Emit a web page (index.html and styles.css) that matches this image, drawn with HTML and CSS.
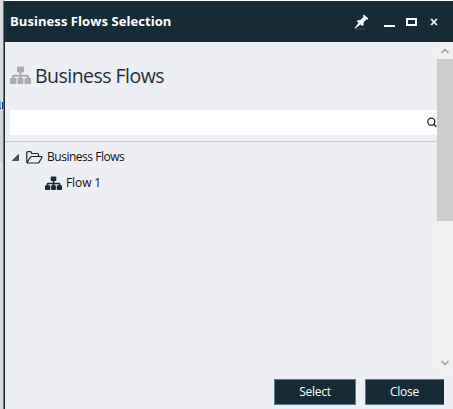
FILE: index.html
```html
<!DOCTYPE html>
<html lang="en">
<head>
<meta charset="utf-8">
<title>Business Flows Selection</title>
<link rel="stylesheet" href="styles.css">
</head>
<body>
<svg width="0" height="0" class="defs">
  <symbol id="sitemap" viewBox="0 0 21 18">
    <path d="M8 0.500h5q1 0 1 1v4q0 1-1 1h-1.500v2.300h6q1.500 0 1.500 1.500v1.700h1q1 0 1 1v4q0 1-1 1h-4.500q-1 0-1-1v-4q0-1 1-1h1.500v-1.300h-5.500v1.300h1q1 0 1 1v4q0 1-1 1h-4q-1 0-1-1v-4q0-1 1-1h1v-1.300h-5.500v1.300h1.500q1 0 1 1v4q0 1-1 1h-4.500q-1 0-1-1v-4q0-1 1-1h1v-1.700q0-1.500 1.500-1.500h6v-2.300h-1.500q-1 0-1-1v-4q0-1 1-1z" fill="currentColor"/>
  </symbol>
</svg>
<div class="screen">
  <div class="backdrop"><i class="tab"></i><i class="panel"></i></div>
  <main class="window">
    <header class="titlebar">
      <h1>Business Flows Selection</h1>
      <div class="controls">
        <svg class="pin" width="15" height="16" viewBox="0 0 15 16"><path d="M9.800 0.500L14.300 4.500L13.200 5.700L12.200 5.400L9.600 8.500L9.500 11L8.300 12L6.500 10.500L1.500 14.500L0.500 14.200L4.500 8.800L2.800 7.200L3.800 6.200L6.300 5.900L9.500 3L9 1.500Z" fill="#fff"/><path d="M1 15h10" stroke="#3d5461" stroke-width="1"/></svg>
        <i class="minimize"></i>
        <i class="maximize"></i>
        <svg class="close" width="8" height="8" viewBox="0 0 8 8"><path d="M1.500 1.500L6.500 6.500M6.500 1.500L1.500 6.500" stroke="#fff" stroke-width="1.600"/><path d="M.5 1.300h2.300M5.200 1.300h2.300M.5 6.700h2.300M5.200 6.700h2.300" stroke="#fff" stroke-width=".9"/></svg>
      </div>
    </header>
    <div class="body">
      <section class="content">
        <div class="heading">
          <svg width="21" height="18"><use href="#sitemap"/></svg>
          <h2>Business Flows</h2>
        </div>
        <div class="search">
          <svg width="10" height="11" viewBox="0 0 10 11"><circle cx="4.300" cy="4.700" r="3.500" fill="none" stroke="#172b37" stroke-width="1.300"/><path d="M6.300 7L9.500 9.800" stroke="#172b37" stroke-width="1.400"/></svg>
        </div>
        <div class="tree">
          <div class="row root">
            <svg class="arrow" width="7" height="7" viewBox="0 0 7 7"><path d="M6.500 .5V6.500H.5Z" fill="#555" stroke="#333" stroke-width=".8"/></svg>
            <svg class="folder" width="17" height="13" viewBox="0 0 17 13"><path d="M.8 11V1.700Q.8.700 1.800.700H4.500Q5.500.700 5.500 1.700V2.500H11.500Q12.500 2.500 12.500 3.500V5.500M1.200 11.500L4.200 6.300Q4.700 5.500 5.500 5.500H15.500Q16.400 5.600 15.800 6.500L13.200 11.100Q12.600 12 11.500 12H1.800Q.8 12 .8 11" fill="none" stroke="#172b37" stroke-width="1.200"/></svg>
            <span>Business Flows</span>
          </div>
          <div class="row child">
            <svg width="17" height="14" viewBox="0 0 21 18" preserveAspectRatio="none"><use href="#sitemap"/></svg>
            <span>Flow 1</span>
          </div>
        </div>
      </section>
      <div class="scrollbar">
        <svg width="16" height="17"><path d="M4.500 11L8 7.500L11.500 11" fill="none" stroke="#999" stroke-width="1.300"/></svg>
        <div class="thumb"></div>
        <svg class="down" width="16" height="17"><path d="M4.500 8L8 11.500L11.500 8" fill="none" stroke="#999" stroke-width="1.300"/></svg>
      </div>
    </div>
    <footer>
      <button class="select"><span>Select</span></button>
      <button class="dismiss"><span>Close</span></button>
    </footer>
  </main>
</div>
</body>
</html>
```
FILE: styles.css
```css
* { box-sizing: border-box; }
body { margin: 0; width: 453px; height: 409px; overflow: hidden; background: #eeeff4; color: #111; font: 12px/16px "Open Sans", "Noto Sans", sans-serif; }
.defs { display: block; height: 0; }
svg { display: block; flex: none; }
.screen { display: flex; height: 409px; }
.backdrop { width: 3px; flex: none; background: #dcdde1; }
.tab { display: block; width: 1px; height: 7px; margin-top: 101px; background: #69afd8; box-shadow: 0 1px #172b60, 2px 1px #172b60; }
.panel { display: block; height: 53px; margin-top: 1px; background: #d2d2d5; }
.window { display: flex; flex-direction: column; flex: 1; min-width: 0; border-left: 1px solid #2f86bd; border-top: 1px solid #fff; box-shadow: inset 1px 0 #172b37; padding-left: 1px; }
.titlebar { height: 41px; flex: none; display: flex; justify-content: space-between; align-items: center; margin-left: -1px; padding: 0 15px 0 6px; background: #172b37; }
h1 { margin: -2px 0 0; color: #fff; font-size: 13px; font-weight: 700; line-height: 18px; letter-spacing: .07px; white-space: nowrap; }
.controls { display: flex; align-items: center; }
.pin { margin-right: 15px; }
.minimize { width: 11px; height: 2px; margin: 9px 11px 0 0; background: #fff; }
.maximize { width: 11px; height: 8px; margin-right: 13px; border: 2px solid #fff; }
.body { height: 328px; flex: none; display: flex; }
.content { width: 432px; flex: none; }
.heading { display: flex; align-items: center; height: 68px; padding-left: 5px; color: #aaa; }
.heading svg { margin-top: -3px; }
h2 { margin: 0 0 0 4px; color: #222e36; font-size: 19.5px; font-weight: 400; line-height: 28px; letter-spacing: -.53px; }
.search { display: flex; align-items: center; justify-content: flex-end; height: 25px; margin-left: 5px; background: #fff; }
.tree { margin-top: 6px; border-top: 1px solid #c9cace; padding-top: 2px; }
.row { display: flex; align-items: center; height: 26px; letter-spacing: -.48px; white-space: nowrap; }
.root { padding-left: 7px; }
.folder { margin: 0 4px 0 7px; }
.child { padding-left: 40px; color: #172b37; letter-spacing: -.1px; }
.child span { margin-left: 4px; color: #111; }
.scrollbar { width: 16px; flex: none; display: flex; flex-direction: column; background: #f0f0f0; }
.thumb { height: 162px; background: #cdcdcd; }
.down { margin-top: auto; }
footer { display: flex; gap: 9px; padding: 9px 0 0 269px; }
button { height: 26px; padding: 0; border: 1px solid #5d7c89; background: #172b37; color: #fff; font: inherit; letter-spacing: -.25px; }
.select { width: 82px; }
.dismiss { width: 79px; border-right-color: #172b37; }
```
